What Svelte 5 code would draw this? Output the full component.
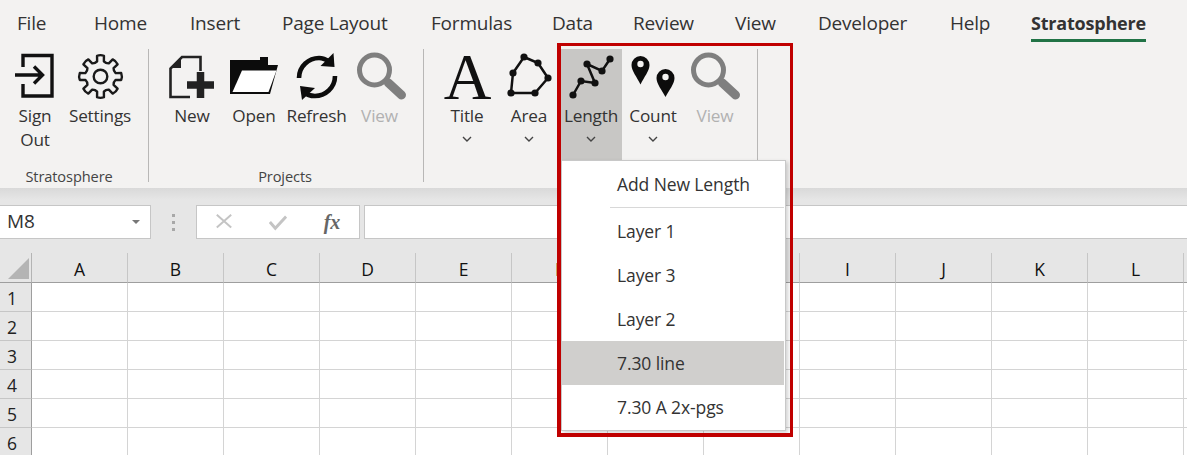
<script>
  const tabs = ['File','Home','Insert','Page Layout','Formulas','Data','Review','View','Developer','Help'];
  const cols = 'ABCDEFGHIJKL'.split('').concat('');
  const rows = [1,2,3,4,5,6];
  const items = [
    { t: 'Layer 1' }, { t: 'Layer 3' }, { t: 'Layer 2' },
    { t: '7.30 line', on: true }, { t: '7.30 A 2x-pgs' }
  ];
  function gear(cx, cy, ro, ri, n) {
    let d = '';
    const p = (r, a) => `${(cx + r * Math.sin(a)).toFixed(2)} ${(cy - r * Math.cos(a)).toFixed(2)}`;
    for (let i = 0; i < n; i++) {
      const a = (i * 2 * Math.PI) / n;
      const s = Math.PI / n;
      d += `${i ? 'L' : 'M'}${p(ri, a - s * 0.56)} L${p(ro, a - s * 0.42)} Q${p(ro + 1, a)} ${p(ro, a + s * 0.42)} L${p(ri, a + s * 0.56)} Q${p(ri - 1.5, a + s)} ${p(ri, a + s * 1.44)} `;
    }
    return d + 'Z';
  }
  const area = [[524,57],[538,63],[548,78],[535,93],[511,93],[513,73]];
  const len = [[573,95],[581,81],[595,83],[587,64],[602,71],[610,59]];
  const pts = (a) => a.map((p) => p.join(',')).join(' ');
</script>

{#snippet lens(cx)}
  <circle cx={cx} cy="70" r="15" fill="none" stroke="#7f7f7f" stroke-width="5" />
  <path d="M{cx + 14} 83 L{cx + 27} 95" stroke="#7f7f7f" stroke-width="9" stroke-linecap="round" />
{/snippet}

<div class="root">
  <nav class="tabs">
    {#each tabs as t}<span class="tab">{t}</span>{/each}
    <span class="tab active">Stratosphere</span>
  </nav>

  <section class="ribbon">
    <div class="group g1">
      <div class="btns">
        <div class="btn">
          <svg class="ico" viewBox="4 49 62 54">
            <path d="M23 67 V55.5 H52 V96 H23 V84" fill="none" stroke="#111" stroke-width="3.4" />
            <path d="M15 75 H42 M34 66.5 L42.5 75 L34 83.5" fill="none" stroke="#111" stroke-width="3.4" />
          </svg>
          <span class="lbl">Sign Out</span>
        </div>
        <div class="btn w68">
          <svg class="ico" viewBox="66 49 68 54">
            <path d={gear(100.5, 76.5, 21, 15.5, 8)} fill="none" stroke="#1a1a1a" stroke-width="2.4" stroke-linejoin="round" />
            <circle cx="100.5" cy="76.5" r="6.8" fill="none" stroke="#1a1a1a" stroke-width="2.4" />
          </svg>
          <span class="lbl">Settings</span>
        </div>
      </div>
      <div class="glabel shift">Stratosphere</div>
    </div>

    <div class="group g2">
      <div class="btns">
        <div class="btn">
          <svg class="ico" viewBox="161 49 62 54">
            <path d="M200.5 71 V57 H182 L170.5 68.5 V97 H190" fill="none" stroke="#222" stroke-width="2.6" />
            <path d="M181 58 V68 H171 Z" fill="#222" />
            <path d="M187 85 H214 M200.5 72 V98" stroke="#222" stroke-width="7.5" />
          </svg>
          <span class="lbl">New</span>
        </div>
        <div class="btn">
          <svg class="ico" viewBox="223 49 62 54">
            <path d="M230 60 H260 V57 H268 V65 H278 L270 94 H230 Z" fill="#0c0c0c" />
            <path d="M242 70.5 H276.5 L268.5 92 H232.5 Z" fill="#fff" />
          </svg>
          <span class="lbl">Open</span>
        </div>
        <div class="btn w63">
          <svg class="ico" viewBox="285 49 63 54">
            <path d="M299 78 C299 66 309 58 319 58 C324 58 327 60 330 62" fill="none" stroke="#0c0c0c" stroke-width="4.6" />
            <path d="M333.5 53 L334.5 67 L320.5 66 Z" fill="#0c0c0c" />
            <path d="M335 76 C335 88 325 96 315 96 C310 96 307 95 304 92" fill="none" stroke="#0c0c0c" stroke-width="4.6" />
            <path d="M302 100 L300 86 L315 88 Z" fill="#0c0c0c" />
          </svg>
          <span class="lbl">Refresh</span>
        </div>
        <div class="btn w63 off">
          <svg class="ico" viewBox="348 49 63 54">{@render lens(374.5)}</svg>
          <span class="lbl">View</span>
        </div>
      </div>
      <div class="glabel shift">Projects</div>
    </div>

    <div class="group g3">
      <div class="btns">
        <div class="btn">
          <svg class="ico" viewBox="436 49 62 54">
            <text x="467.5" y="99" text-anchor="middle" class="bigA">A</text>
          </svg>
          <span class="lbl">Title</span>
          <svg class="chev" viewBox="0 0 10 6"><path d="M1 1 L5 5 L9 1" /></svg>
        </div>
        <div class="btn">
          <svg class="ico" viewBox="498 49 62 54">
            <polygon points={pts(area)} fill="none" stroke="#111" stroke-width="2.5" />
            {#each area as p}<circle cx={p[0]} cy={p[1]} r="3.6" fill="#111" />{/each}
          </svg>
          <span class="lbl">Area</span>
          <svg class="chev" viewBox="0 0 10 6"><path d="M1 1 L5 5 L9 1" /></svg>
        </div>
        <div class="btn pressed">
          <svg class="ico" viewBox="560 49 62 54">
            <polyline points={pts(len)} fill="none" stroke="#111" stroke-width="2.5" />
            {#each len as p}<circle cx={p[0]} cy={p[1]} r="3.6" fill="#111" />{/each}
          </svg>
          <span class="lbl">Length</span>
          <svg class="chev" viewBox="0 0 10 6"><path d="M1 1 L5 5 L9 1" /></svg>
        </div>
        <div class="btn">
          <svg class="ico" viewBox="622 49 62 54">
            <path d="M640.5 84.5 C637 77 631.5 71 631.5 65 A9 9 0 0 1 649.5 65 C649.5 71 644 77 640.5 84.5 Z" fill="#0c0c0c" />
            <circle cx="640.5" cy="64" r="3.2" fill="#f3f2f1" />
            <path d="M665.5 97 C662 90 656.5 84 656.5 78 A9 9 0 0 1 674.5 78 C674.5 84 669 90 665.5 97 Z" fill="#0c0c0c" />
            <circle cx="665.5" cy="77" r="3.2" fill="#f3f2f1" />
          </svg>
          <span class="lbl">Count</span>
          <svg class="chev" viewBox="0 0 10 6"><path d="M1 1 L5 5 L9 1" /></svg>
        </div>
        <div class="btn off">
          <svg class="ico" viewBox="684 49 62 54">{@render lens(708.5)}</svg>
          <span class="lbl">View</span>
        </div>
      </div>
    </div>
  </section>

  <section class="fbar">
    <div class="namebox">
      <span>M8</span>
      <svg class="caret" viewBox="0 0 8 4"><path d="M0 0 H8 L4 4 Z" /></svg>
    </div>
    <div class="grip"><i></i><i></i><i></i></div>
    <div class="fxbox">
      <svg class="fxi" viewBox="0 0 20 20"><path d="M2 2 L18 16 M18 2 L2 16" stroke="#c4c4c4" stroke-width="2.2" /></svg>
      <svg class="fxi" viewBox="0 0 20 20"><path d="M1 10 L7 17 L19 4" fill="none" stroke="#c4c4c4" stroke-width="3.2" /></svg>
      <span class="fx">fx</span>
    </div>
    <div class="input"></div>
  </section>

  <section class="sheet">
    <div class="corner"><svg viewBox="0 0 20 20"><path d="M20 0 V20 H0 Z" fill="#b4b4b4" /></svg></div>
    {#each cols as c}<div class="chead">{c}</div>{/each}
    {#each rows as r}
      <div class="rhead">{r}</div>
      {#each cols as c}<div class="cell"></div>{/each}
    {/each}
  </section>

  <div class="menu">
    <div class="add">Add New Length</div>
    <div class="sep"></div>
    {#each items as it}
      <div class="item" class:on={it.on}>{it.t}</div>
    {/each}
  </div>
  <div class="callout"></div>
</div>

<style>
  :global(body) { margin: 0; }
  .root {
    position: relative;
    width: 1187px;
    height: 455px;
    overflow: hidden;
    background: #f3f2f1;
    font-family: "Open Sans", "Noto Sans", sans-serif;
    color: #333;
  }
  .tabs {
    display: grid;
    grid-template-columns: 77px 96px 92px 149px 121px 81px 102px 83px 132px 81px auto;
    padding-left: 17px;
    height: 49px;
    box-sizing: border-box;
    font-size: 19px;
    letter-spacing: -0.2px;
    line-height: 47px;
  }
  .tab { white-space: nowrap; }
  .active {
    justify-self: start;
    height: 42px;
    font-weight: 700;
    font-size: 18px;
    border-bottom: 3px solid #217346;
    box-sizing: border-box;
  }
  .ribbon { display: flex; height: 139px; }
  .group {
    display: flex;
    flex-direction: column;
    height: 133px;
    box-sizing: border-box;
    border-right: 1px solid #b8b7b6;
  }
  .g1 { width: 149px; padding-left: 4px; }
  .g2 { width: 275px; padding-left: 12px; }
  .g3 { width: 334px; padding-left: 12px; }
  .btns { display: flex; height: 111px; }
  .btn {
    width: 62px;
    height: 111px;
    display: flex;
    flex-direction: column;
    align-items: center;
    text-align: center;
  }
  .w63 { width: 63px; }
  .w68 { width: 68px; }
  .pressed { background: #c8c7c5; }
  .ico { width: 100%; height: 54px; flex: none; overflow: visible; }
  .w68 .ico { width: 68px; }
  .lbl {
    margin-top: 1px;
    font-size: 17.2px;
    letter-spacing: -0.2px;
    line-height: 24px;
    white-space: nowrap;
  }
  .g1 .btn:first-child .lbl { white-space: normal; padding: 0 10px; }
  .off .lbl { color: #b1b1b1; }
  .bigA {
    font-family: "Liberation Serif", serif;
    font-size: 66px;
    fill: #111;
  }
  .chev { width: 10px; height: 6px; margin-top: 8px; flex: none; }
  .chev path { fill: none; stroke: #444; stroke-width: 1.4; }
  .glabel {
    margin-top: auto;
    height: 12px;
    line-height: 12px;
    font-size: 14.6px;
    letter-spacing: -0.1px;
    text-align: center;
    color: #444;
  }
  .shift { padding-right: 14px; }
  .fbar {
    display: flex;
    align-items: flex-start;
    height: 65px;
    box-sizing: border-box;
    padding-top: 17px;
    background: linear-gradient(#d9d9d9 0, #e6e6e6 12px);
  }
  .namebox {
    width: 151px;
    height: 34px;
    box-sizing: border-box;
    background: #fff;
    border: 1px solid #c6c6c6;
    border-left: 0;
    display: flex;
    align-items: center;
    justify-content: space-between;
    padding: 0 10px 2px 7px;
    font-size: 19px;
    letter-spacing: -0.2px;
    color: #333;
  }
  .caret { width: 8px; height: 4px; margin-top: 2px; }
  .caret path { fill: #777; }
  .grip {
    width: 45px;
    height: 34px;
    display: flex;
    flex-direction: column;
    align-items: center;
    justify-content: center;
    gap: 4px;
  }
  .grip i { width: 3px; height: 3px; background: #a8a8a8; display: block; }
  .fxbox {
    width: 164px;
    height: 34px;
    box-sizing: border-box;
    background: #fff;
    border: 1px solid #c6c6c6;
    display: grid;
    grid-template-columns: 53px 55px 54px;
    align-items: center;
    justify-items: center;
  }
  .fxi { width: 18px; height: 18px; }
  .fx {
    font-family: "Liberation Serif", serif;
    font-style: italic;
    font-size: 20px;
    color: #666;
    font-weight: 700;
    line-height: 30px;
  }
  .input {
    flex: 1;
    height: 34px;
    margin-left: 4px;
    box-sizing: border-box;
    background: #fff;
    border: 1px solid #c6c6c6;
    border-right: 0;
  }
  .sheet {
    display: grid;
    grid-template-columns: 32px repeat(13, 96px);
    grid-template-rows: 30px repeat(6, 29px);
    background: #fff;
  }
  .corner, .chead, .rhead { background: #e6e6e6; box-sizing: border-box; }
  .corner {
    border-right: 1px solid #b4b4b4;
    border-bottom: 1px solid #9e9e9e;
    display: flex;
    align-items: flex-end;
    justify-content: flex-end;
    padding: 0 2px 3px 0;
  }
  .corner svg { width: 21px; height: 21px; }
  .chead {
    border-right: 1px solid #c6c6c6;
    border-bottom: 1px solid #9e9e9e;
    text-align: center;
    font-size: 17.5px;
    line-height: 33px;
    color: #111;
  }
  .rhead {
    border-right: 1px solid #9e9e9e;
    border-bottom: 1px solid #c6c6c6;
    padding-left: 7px;
    font-size: 17.5px;
    line-height: 30px;
    color: #222;
  }
  .cell {
    box-sizing: border-box;
    border-right: 1px solid #d4d4d4;
    border-bottom: 1px solid #d4d4d4;
  }
  .menu {
    position: absolute;
    left: 561px;
    top: 160px;
    width: 225px;
    height: 271px;
    box-sizing: border-box;
    background: #fff;
    border: 1px solid #c8c8c8;
    box-shadow: 2px 2px 4px rgba(0, 0, 0, 0.18);
    padding-right: 1px;
    font-size: 17.5px;
    letter-spacing: -0.1px;
    color: #333;
  }
  .add {
    height: 46px;
    line-height: 46px;
    padding-left: 55px;
  }
  .sep { height: 1px; margin: 0 0 1px 48px; background: #d8d8d8; }
  .item { height: 44px; line-height: 44px; padding-left: 55px; }
  .on { background: #d0cfcd; }
  .callout {
    position: absolute;
    left: 557px;
    top: 43px;
    width: 236px;
    height: 394px;
    box-sizing: border-box;
    border: solid #c00000;
    border-width: 3px 3px 4px 4px;
    pointer-events: none;
  }
</style>
